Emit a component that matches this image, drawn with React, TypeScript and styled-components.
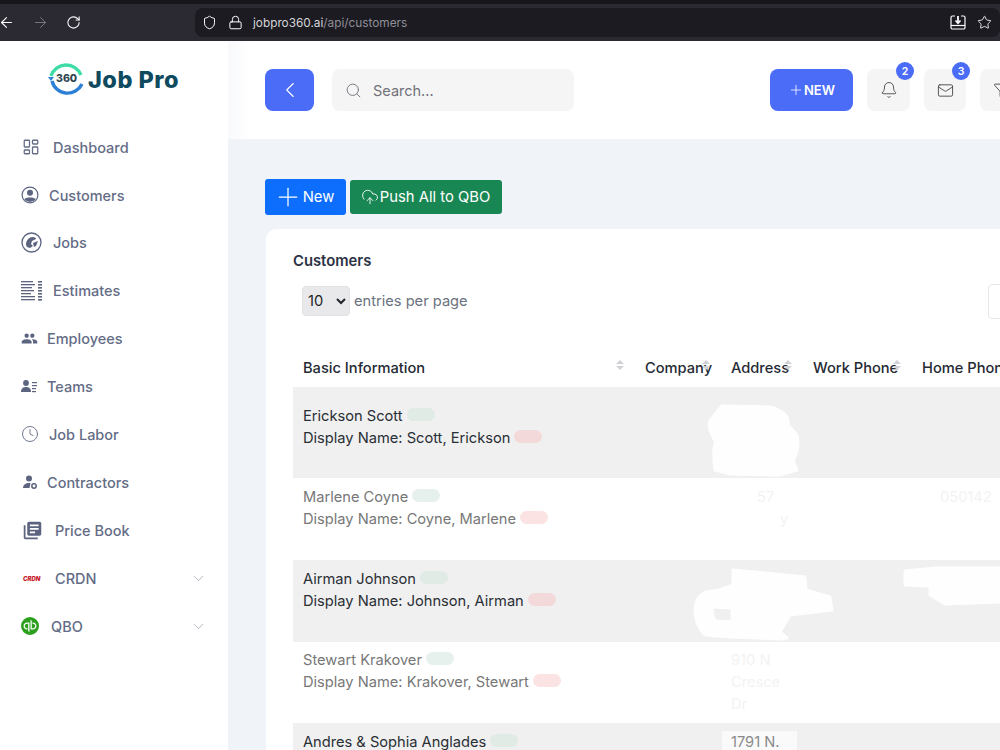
import React from "react";
import styled, { createGlobalStyle } from "styled-components";
import {
  ArrowLeft,
  ArrowRight,
  Bell,
  ChevronDown,
  ChevronLeft,
  Clock,
  CloudUpload,
  Filter,
  LayoutDashboard,
  Lock,
  Mail,
  Plus,
  RotateCw,
  Search,
  Shield,
  Star,
} from "lucide-react";
import { MdLibraryBooks, MdPeople } from "react-icons/md";
import { SiQuickbooks } from "react-icons/si";

const GlobalStyle = createGlobalStyle`
  html, body { margin: 0; padding: 0; background: #fff; }
  body { font-family: Inter, "Liberation Sans", sans-serif; }
  * { box-sizing: border-box; }
`;

const Page = styled.div`
  width: 1000px;
  height: 750px;
  overflow: hidden;
  display: flex;
  flex-direction: column;
`;

/* browser chrome */
const Chrome = styled.div`
  height: 41px;
  flex: none;
  background: #2b2a33;
  border-top: 4px solid #17161b;
  display: flex;
  align-items: center;
  color: #fbfbfe;
`;

const ChromeIcons = styled.div`
  width: 197px;
  display: flex;
  align-items: center;
  gap: 17px;
  margin-left: -2px;
  flex: none;
`;

const UrlBar = styled.div`
  flex: 1;
  height: 29px;
  background: #1c1b22;
  border-radius: 8px;
  display: flex;
  align-items: center;
  padding: 0 8px 0 7px;
  gap: 11px;
  font-size: 11.8px;
`;

const UrlText = styled.div`
  color: #d6d6da;
  margin-left: -1px;
  span {
    color: #8f8f96;
  }
`;

const UrlRight = styled.div`
  margin-left: auto;
  display: flex;
  align-items: center;
  gap: 11px;
`;

const Layout = styled.div`
  flex: 1;
  display: flex;
  min-height: 0;
`;

/* sidebar */
const Sidebar = styled.aside`
  width: 228px;
  flex: none;
  background: #fff;
`;

const LogoRow = styled.div`
  height: 82.2px;
  padding: 18px 0 0 48px;
  display: flex;
  align-items: flex-start;
`;

const LogoMark = styled.div`
  position: relative;
  width: 40px;
  height: 40px;
  flex: none;
`;

const LogoDigits = styled.div`
  position: absolute;
  left: 8px;
  top: 13px;
  font-size: 10.5px;
  font-weight: 800;
  color: #2f4650;
`;

const LogoText = styled.div`
  font-size: 23.5px;
  font-weight: 800;
  color: #0f4a5f;
  line-height: 42px;
  letter-spacing: 0.5px;
  white-space: nowrap;
`;

const NavList = styled.nav`
  display: flex;
  flex-direction: column;
`;

const NavItem = styled.div`
  height: 47.9px;
  display: flex;
  align-items: center;
  padding-left: 21px;
  font-size: 14.5px;
  font-weight: 500;
  color: #646c86;
`;

const NavIcon = styled.span<{ $w: number; $inset?: number }>`
  width: ${(p) => p.$w}px;
  padding-left: ${(p) => p.$inset ?? 0}px;
  flex: none;
  display: flex;
  align-items: center;
`;

const NavChevron = styled.span`
  margin-left: auto;
  margin-right: 21px;
  display: flex;
  color: #9aa0ad;
`;

const CrdnMark = styled.span`
  font-size: 6px;
  font-weight: 900;
  font-style: italic;
  color: #c8242f;
`;

/* main */
const Main = styled.main`
  flex: 1;
  min-width: 0;
  overflow: hidden;
  background: #f0f3f8;
`;

const TopBar = styled.header`
  height: 98px;
  background: linear-gradient(90deg, #f8f9fb 0, #fff 22px);
  display: flex;
  align-items: center;
  padding-left: 37px;
  width: 840px;
`;

const BackButton = styled.button`
  width: 49px;
  height: 42px;
  border: 0;
  border-radius: 8px;
  background: #4a6cf7;
  color: #fff;
  display: flex;
  align-items: center;
  justify-content: center;
  padding: 0;
`;

const SearchBox = styled.div`
  width: 242px;
  height: 42px;
  margin-left: 18px;
  padding-left: 13px;
  border-radius: 8px;
  background: #f5f5f5;
  color: #71717a;
  display: flex;
  align-items: center;
  gap: 11px;
  font-size: 14.5px;
`;

const NewButton = styled.button`
  width: 83px;
  height: 42px;
  margin-left: 196px;
  border: 0;
  border-radius: 8px;
  background: #4a6cf7;
  color: #fff;
  font: 600 13px Inter, sans-serif;
  display: flex;
  align-items: center;
  justify-content: center;
  padding: 0;
`;

const IconButton = styled.div<{ $w: number }>`
  position: relative;
  width: ${(p) => p.$w}px;
  height: 42px;
  margin-left: 14px;
  border-radius: 8px;
  background: #f5f5f5;
  color: #3a3a40;
  display: flex;
  align-items: center;
  justify-content: center;
  flex: none;
`;

const Badge = styled.span`
  position: absolute;
  top: -7px;
  right: -4px;
  width: 18px;
  height: 18px;
  border-radius: 50%;
  background: #4a6cf7;
  color: #fff;
  font-size: 10.5px;
  font-weight: 600;
  display: flex;
  align-items: center;
  justify-content: center;
`;

const Content = styled.section`
  padding: 40px 0 0 37px;
`;

const ActionRow = styled.div`
  display: flex;
  align-items: center;
  gap: 4px;
  height: 36px;
`;

const ActionButton = styled.button<{ $bg: string; $h: number; $w: number; $gap: number; $right: number }>`
  width: ${(p) => p.$w}px;
  height: ${(p) => p.$h}px;
  border: 0;
  border-radius: 3px;
  background: ${(p) => p.$bg};
  color: #fff;
  font: 400 14.8px Inter, sans-serif;
  display: flex;
  align-items: center;
  justify-content: center;
  gap: ${(p) => p.$gap}px;
  padding: 0 ${(p) => p.$right}px 1px 0;
`;

const Card = styled.div`
  width: 800px;
  height: 560px;
  margin: 14px 0 0 1px;
  padding: 23px 0 0 27px;
  background: #fff;
  border-radius: 10px 0 0 0;
`;

const CardTitle = styled.h2`
  margin: 0;
  height: 18px;
  line-height: 18px;
  font-size: 14.8px;
  font-weight: 600;
  color: #2b3245;
`;

const EntriesRow = styled.div`
  margin-top: 16px;
  padding-left: 9px;
  width: 795px;
  height: 30px;
  display: flex;
  align-items: center;
  gap: 4px;
  font-size: 14.65px;
  color: #6b7280;
  white-space: nowrap;
`;

const PageSize = styled.select`
  width: 48px;
  height: 30px;
  flex: none;
  background: #e9e9ec;
  border: 1px solid #e2e2e5;
  border-radius: 4px;
  padding-left: 1px;
  font: 400 14.65px Inter, sans-serif;
  color: #212529;
`;

const TableSearch = styled.div`
  margin-left: auto;
  width: 100px;
  height: 35px;
  flex: none;
  border: 1px solid #e5e7eb;
  border-radius: 4px;
`;

const TableWrap = styled.div`
  position: relative;
  margin-top: 29px;
  width: 707px;
  height: 405px;
  overflow: hidden;
`;

const HeadRow = styled.div`
  display: grid;
  grid-template-columns: 342px 86px 82px 109px 200px;
  height: 42px;
  font-size: 14.65px;
  font-weight: 450;
  color: #252a34;
`;

const HeadCell = styled.div`
  position: relative;
  padding: 14px 0 0 10px;
  white-space: nowrap;
`;

const SortMark = styled.span`
  position: absolute;
  right: 11px;
  top: 15px;
  display: flex;
  flex-direction: column;
  gap: 2px;
  &::before,
  &::after {
    content: "";
    border-left: 4px solid transparent;
    border-right: 4px solid transparent;
  }
  &::before {
    border-bottom: 4px solid #d0d0d5;
  }
  &::after {
    border-top: 4px solid #d0d0d5;
  }
`;

const Row = styled.div<{ $h: number; $striped: boolean; $top: number }>`
  display: grid;
  grid-template-columns: 342px 86px 82px 109px 200px;
  height: ${(p) => p.$h}px;
  padding-top: ${(p) => p.$top}px;
  background: ${(p) => (p.$striped ? "#f0f0f0" : "#fff")};
  color: ${(p) => (p.$striped ? "#2a2e35" : "#777")};
  font-size: 14.65px;
  line-height: 22px;
`;

const Cell = styled.div`
  padding-left: 10px;
  white-space: nowrap;
`;

const Line = styled.div`
  display: flex;
  align-items: center;
  gap: 4px;
`;

const Pill = styled.span<{ $tone: string }>`
  width: 28px;
  height: 13px;
  margin-top: -4px;
  border-radius: 7px;
  background: ${(p) => p.$tone};
`;

const Faint = styled.div<{ $indent?: number }>`
  color: #f3f3f3;
  padding-left: ${(p) => p.$indent ?? 0}px;
`;

const Patch = styled.span`
  display: inline-block;
  margin-left: -9px;
  padding: 0 9px;
  width: 75px;
  background: #fafafa;
  color: #8a8a8a;
`;

const RedactionLayer = styled.svg`
  position: absolute;
  top: 0;
  left: 0;
  pointer-events: none;
`;

const navItems = [
  { label: "Dashboard", w: 32, inset: 1, icon: <LayoutDashboard size={18} strokeWidth={1.7} /> },
  {
    label: "Customers",
    w: 28,
    icon: (
      <svg width="18" height="18" viewBox="0 0 18 18">
        <circle cx="9" cy="9" r="7.9" fill="none" stroke="#5c6480" strokeWidth="1.2" />
        <circle cx="9" cy="6.8" r="3" fill="#5c6480" />
        <path d="M3.2 13.2C4.6 10.8 13.4 10.8 14.8 13.2A7.6 7.6 0 0 1 3.2 13.2Z" fill="#5c6480" />
      </svg>
    ),
  },
  {
    label: "Jobs",
    w: 32,
    icon: (
      <svg width="21" height="21" viewBox="0 0 21 21">
        <circle cx="10.5" cy="10.5" r="9.5" fill="none" stroke="#5c6480" strokeWidth="1.3" />
        <path d="M5 13C5 8 8 5 12 5C14 5 15 6 15 7L11 9L10 12L12 14L9 16L6 15Z" fill="#5c6480" />
        <path d="M12 11L17 9L15 14L13 15Z" fill="#5c6480" />
      </svg>
    ),
  },
  {
    label: "Estimates",
    w: 32,
    icon: (
      <svg width="21" height="20" viewBox="0 0 21 20" fill="#5c6480">
        <rect x="0" y="0" width="12" height="1.3" />
        <rect x="0" y="3" width="14" height="1.3" />
        <rect x="0" y="6" width="11" height="1.3" />
        <rect x="0" y="9" width="13" height="1.3" />
        <rect x="0" y="12" width="10" height="1.3" />
        <rect x="0" y="15" width="14" height="1.3" />
        <rect x="0" y="18" width="14" height="1.3" />
        <rect x="17" y="0" width="4" height="1.6" />
        <rect x="17" y="3" width="4" height="1.6" />
        <rect x="17" y="6" width="4" height="1.6" />
        <rect x="17" y="9" width="4" height="1.6" />
        <rect x="17" y="12" width="4" height="1.6" />
        <rect x="17" y="15" width="4" height="1.6" />
        <rect x="17" y="18" width="4" height="1.6" />
      </svg>
    ),
  },
  { label: "Employees", w: 26, icon: <MdPeople size={17} color="#5c6480" /> },
  {
    label: "Teams",
    w: 26,
    icon: (
      <svg width="16" height="13" viewBox="0 0 16 13" fill="#5c6480">
        <circle cx="5" cy="3" r="2.9" />
        <path d="M0 12C0 8 2.5 7 5 7C7.5 7 10 8 10 12Z" />
        <rect x="11" y="2" width="5" height="1.2" />
        <rect x="11" y="5" width="5" height="1.2" />
        <rect x="11" y="8" width="4" height="1.2" />
        <rect x="11" y="11" width="4" height="1.2" />
      </svg>
    ),
  },
  { label: "Job Labor", w: 28, icon: <Clock size={18} strokeWidth={1.2} /> },
  {
    label: "Contractors",
    w: 26,
    inset: 2,
    icon: (
      <svg width="14" height="14" viewBox="0 0 14 14" fill="#5c6480">
        <circle cx="6" cy="3.4" r="3" />
        <path d="M0 13C0 9.5 3 8 6 8C6.8 8 7.2 8.1 7.5 8.2L6.5 13Z" />
        <circle cx="11" cy="11" r="2.2" fill="none" stroke="#5c6480" strokeWidth="1.5" />
      </svg>
    ),
  },
  { label: "Price Book", w: 34, inset: 1, icon: <MdLibraryBooks size={21} color="#5c6480" /> },
  { label: "CRDN", w: 34, inset: 2, icon: <CrdnMark>CRDN</CrdnMark>, chevron: true },
  { label: "QBO", w: 30, icon: <SiQuickbooks size={18} color="#2ca01c" />, chevron: true },
];

const customers = [
  {
    name: "Erickson Scott",
    display: "Scott, Erickson",
    h: 91,
    top: 18,
    striped: true,
    green: "#e0ebe6",
    red: "#f3d9da",
  },
  {
    name: "Marlene Coyne",
    display: "Coyne, Marlene",
    h: 82,
    top: 8,
    striped: false,
    green: "#e6f0ec",
    red: "#fbe3e3",
    address: [
      { text: "57", indent: 26 },
      { text: "y", indent: 49 },
    ],
    phone: "050142",
  },
  {
    name: "Airman Johnson",
    display: "Johnson, Airman",
    h: 82,
    top: 8,
    striped: true,
    green: "#e0ebe6",
    red: "#f3d9da",
  },
  {
    name: "Stewart Krakover",
    display: "Krakover, Stewart",
    h: 81,
    top: 7,
    striped: false,
    green: "#e6f0ec",
    red: "#fbe3e3",
    address: [{ text: "910 N" }, { text: "Cresce" }, { text: "Dr" }],
  },
  {
    name: "Andres & Sophia Anglades",
    display: "Anglades, Andres",
    h: 82,
    top: 8,
    striped: true,
    green: "#e0ebe6",
    red: "#f3d9da",
    patch: "1791 N.",
  },
];

const columns = ["Basic Information", "Company", "Address", "Work Phone", "Home Phone"];

export default function App() {
  return (
    <Page>
      <GlobalStyle />
      <Chrome>
        <ChromeIcons>
          <ArrowLeft size={17} strokeWidth={1.6} />
          <ArrowRight size={17} strokeWidth={1.4} color="#77767d" />
          <RotateCw size={15} strokeWidth={1.7} />
        </ChromeIcons>
        <UrlBar>
          <Shield size={15} strokeWidth={1.6} />
          <Lock size={15} strokeWidth={1.6} />
          <UrlText>
            jobpro360.ai<span>/api/customers</span>
          </UrlText>
          <UrlRight>
            <svg width="16" height="15" viewBox="0 0 16 15" fill="none" stroke="#fbfbfe" strokeWidth="1.2">
              <path d="M5 1H2.5A1.5 1.5 0 0 0 1 2.5V12.5A1.5 1.5 0 0 0 2.5 14H13.5A1.5 1.5 0 0 0 15 12.5V2.5A1.5 1.5 0 0 0 13.5 1H11" />
              <path d="M1 10.5H15" />
              <path d="M8 1V7.5" strokeWidth="1.8" />
              <path d="M5.5 5.5L8 8.3L10.5 5.5" strokeWidth="1.6" />
            </svg>
            <Star size={15} strokeWidth={1.4} />
          </UrlRight>
        </UrlBar>
      </Chrome>
      <Layout>
        <Sidebar>
          <LogoRow>
            <LogoMark>
              <svg width="40" height="40" viewBox="0 0 40 40" fill="none">
                <path d="M3 17A16 16 0 0 1 33 16" stroke="#3fdca6" strokeWidth="3.4" />
                <path d="M34 25A16 16 0 0 1 4 22" stroke="#2e80d6" strokeWidth="3.4" />
                <path d="M0 18H6L3 22Z" fill="#2e80d6" />
              </svg>
              <LogoDigits>360</LogoDigits>
            </LogoMark>
            <LogoText>Job Pro</LogoText>
          </LogoRow>
          <NavList>
            {navItems.map((item) => (
              <NavItem key={item.label}>
                <NavIcon $w={item.w} $inset={item.inset}>
                  {item.icon}
                </NavIcon>
                {item.label}
                {item.chevron && (
                  <NavChevron>
                    <ChevronDown size={17} strokeWidth={1} />
                  </NavChevron>
                )}
              </NavItem>
            ))}
          </NavList>
        </Sidebar>
        <Main>
          <TopBar>
            <BackButton aria-label="Back">
              <ChevronLeft size={26} strokeWidth={1} />
            </BackButton>
            <SearchBox>
              <Search size={17} strokeWidth={1.3} />
              Search...
            </SearchBox>
            <NewButton>
              <Plus size={16} strokeWidth={1.2} />
              NEW
            </NewButton>
            <IconButton $w={43}>
              <Bell size={18} strokeWidth={1.1} />
              <Badge>2</Badge>
            </IconButton>
            <IconButton $w={42}>
              <Mail size={17} strokeWidth={1.2} />
              <Badge>3</Badge>
            </IconButton>
            <IconButton $w={42}>
              <Filter size={17} strokeWidth={1.2} />
            </IconButton>
          </TopBar>
          <Content>
            <ActionRow>
              <ActionButton $bg="#0d6efd" $h={36} $w={81} $gap={0} $right={4}>
                <Plus size={30} strokeWidth={1} />
                New
              </ActionButton>
              <ActionButton $bg="#198754" $h={34} $w={152} $gap={1} $right={1}>
                <CloudUpload size={18} strokeWidth={1.2} />
                Push All to QBO
              </ActionButton>
            </ActionRow>
            <Card>
              <CardTitle>Customers</CardTitle>
              <EntriesRow>
                <PageSize defaultValue="10">
                  <option value="10">10</option>
                  <option value="25">25</option>
                </PageSize>
                entries per page
                <TableSearch />
              </EntriesRow>
              <TableWrap>
                <HeadRow>
                  {columns.map((col) => (
                    <HeadCell key={col}>
                      {col}
                      <SortMark />
                    </HeadCell>
                  ))}
                </HeadRow>
                {customers.map((c) => (
                  <Row key={c.name} $h={c.h} $top={c.top} $striped={c.striped}>
                    <Cell>
                      <Line>
                        {c.name}
                        <Pill $tone={c.green} />
                      </Line>
                      <Line>
                        Display Name: {c.display}
                        <Pill $tone={c.red} />
                      </Line>
                    </Cell>
                    <Cell />
                    <Cell>
                      {c.patch && <Patch>{c.patch}</Patch>}
                      {c.address?.map((l) => (
                        <Faint key={l.text} $indent={l.indent}>
                          {l.text}
                        </Faint>
                      ))}
                    </Cell>
                    <Cell />
                    <Cell>{c.phone && <Faint $indent={18}>{c.phone}</Faint>}</Cell>
                  </Row>
                ))}
                <RedactionLayer width="707" height="405" viewBox="293 345 707 405">
                  <g fill="#fefefe" stroke="#fefefe" strokeWidth="3" strokeLinejoin="round">
                    <path d="M722 406L770 407Q790 412 788 425L797 435Q800 450 793 460L797 470L780 475L730 474L715 470Q712 450 716 442Q705 425 712 418Z" />
                    <path
                      fillRule="evenodd"
                      d="M733 570L805 577L806 590L830 597L832 610L790 615L780 632L787 638L780 639L730 637L705 635Q695 625 695 610Q696 592 712 591L720 590L733 585ZM712 607L732 608L732 622L716 621Q712 618 712 607Z"
                    />
                    <path d="M905 571L935 568L1002 568V602L945 604L930 595L930 586L905 585Z" />
                  </g>
                </RedactionLayer>
              </TableWrap>
            </Card>
          </Content>
        </Main>
      </Layout>
    </Page>
  );
}
